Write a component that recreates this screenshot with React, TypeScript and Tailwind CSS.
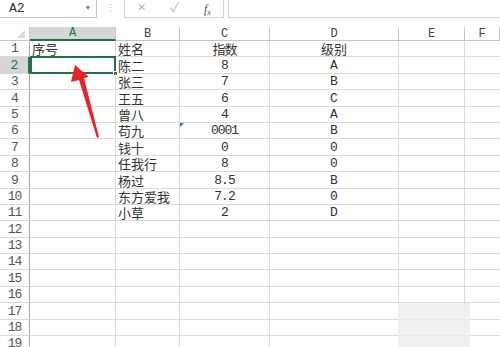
import React from 'react';

const cols = [
  { key: 'A', w: 'w-[86px]' },
  { key: 'B', w: 'w-[64px]' },
  { key: 'C', w: 'w-[90px]' },
  { key: 'D', w: 'w-[129px]' },
  { key: 'E', w: 'w-[66px]' },
  { key: 'F', w: 'flex-1' },
];

const data: { name: string; score: string; level: string }[] = [
  { name: '姓名', score: '指数', level: '级别' },
  { name: '陈二', score: '8', level: 'A' },
  { name: '张三', score: '7', level: 'B' },
  { name: '王五', score: '6', level: 'C' },
  { name: '曾八', score: '4', level: 'A' },
  { name: '苟九', score: '0001', level: 'B' },
  { name: '钱十', score: '0', level: '0' },
  { name: '任我行', score: '8', level: '0' },
  { name: '杨过', score: '8.5', level: 'B' },
  { name: '东方爱我', score: '7.2', level: '0' },
  { name: '小草', score: '2', level: 'D' },
];

const mono = { fontFamily: '"Liberation Mono", "Noto Sans CJK SC", monospace' };
const cjk = { fontFamily: '"Noto Sans CJK SC", sans-serif' };

export default function App() {
  const rows = Array.from({ length: 19 }, (_, i) => i + 1);

  return (
    <div className="relative w-[500px] h-[347px] overflow-hidden bg-white text-[13px] text-[#333]" style={mono}>
      {/* Formula bar */}
      <div className="flex items-stretch h-[18px]">
        <div className="w-[97px] flex items-center justify-between border border-[#c8c8c8] border-l-0 border-t-0 pl-[9px] pr-[6px] text-[#333]">
          <span className="leading-none">A2</span>
          <span className="text-[7px] text-[#777]">▼</span>
        </div>
        <div className="w-[27px] flex items-center justify-center text-[#b5b5b5] text-[11px]">⋮</div>
        <div className="w-[100px] flex items-center justify-around border border-[#d4d4d4] border-t-0 text-[#b8b8b8]">
          <span className="text-[15px] leading-none">×</span>
          <span className="text-[13px] leading-none">✓</span>
          <span className="italic text-[#555] text-[12px] leading-none" style={{ fontFamily: '"Liberation Serif", serif' }}>
            f<sub className="text-[8px]">x</sub>
          </span>
        </div>
        <div className="flex-1 ml-[4px] border border-[#d4d4d4] border-t-0 border-r-0" />
      </div>

      <div className="h-[9px]" />

      {/* Column headers */}
      <div className="flex h-[14px] text-[12px] text-[#444]">
        <div className="w-[30px] relative border-r border-b border-[#c6c6c6]">
          <div className="absolute right-[4px] bottom-[2px] w-0 h-0 border-l-[8px] border-l-transparent border-b-[8px] border-b-[#d8d8d8]" />
        </div>
        {cols.map((c) =>
          c.key === 'A' ? (
            <div key={c.key} className={`${c.w} flex items-center justify-center leading-none bg-[#d6d6d6] border-r border-[#c6c6c6] border-b-2 border-b-[#217346] text-[#217346]`}>
              {c.key}
            </div>
          ) : (
            <div key={c.key} className={`${c.w} flex items-center justify-center leading-none border-r border-b border-[#c6c6c6]`}>
              {c.key}
            </div>
          )
        )}
      </div>

      {/* Rows */}
      {rows.map((r) => {
        const d = data[r - 1];
        const sel = r === 2;
        return (
          <div key={r} className="flex h-[16.4px]">
            <div
              className={`w-[30px] flex items-end justify-center pb-[1px] text-[13px] tracking-[-1px] border-b border-[#dadada] ${
                sel ? 'bg-[#d6d6d6] border-r-2 border-r-[#217346] text-[#217346]' : 'border-r border-r-[#a8a8a8] text-[#555]'
              }`}
            >
              <span className="leading-[13px]">{r}</span>
            </div>
            <div className="w-[86px] relative flex items-end pl-[2px] pb-[1px] border-r border-b border-[#dadada]">
              {r === 1 && <span className="leading-[13px]" style={cjk}>序号</span>}
              {sel && (
                <div className="absolute left-0 -top-px right-[-1px] bottom-[-1px] border-2 border-[#217346]">
                  <div className="absolute right-[-4px] bottom-[-4px] w-[5px] h-[5px] bg-[#217346] border border-white" />
                </div>
              )}
            </div>
            <div className="w-[64px] flex items-end pl-[2px] pb-[1px] border-r border-b border-[#dadada]">
              <span className="leading-[13px]" style={cjk}>{d?.name}</span>
            </div>
            <div className="w-[90px] relative flex items-end justify-center pb-[1px] border-r border-b border-[#dadada]">
              {r === 6 && (
                <div className="absolute left-0 top-0 w-0 h-0 border-t-[4px] border-t-[#1e8c3a] border-r-[4px] border-r-transparent" />
              )}
              <span className="leading-[13px] tracking-[-1px]" style={r === 1 ? cjk : undefined}>{d?.score}</span>
            </div>
            <div className="w-[129px] flex items-end justify-center pb-[1px] border-r border-b border-[#dadada]">
              <span className="leading-[13px]" style={r === 1 ? cjk : undefined}>{d?.level}</span>
            </div>
            <div className="w-[66px] border-r border-b border-[#dadada]" />
            <div className="flex-1 border-b border-[#dadada]" />
          </div>
        );
      })}

      {/* Red annotation arrow */}
      <svg className="absolute left-0 top-0 pointer-events-none" width="500" height="347">
        <polygon points="75,65 89,77 84,78 99,137 97,138 79,80 71,82" fill="#e8242b" />
      </svg>

      {/* Watermark blur */}
      <div className="absolute left-[398px] top-[303px] w-[72px] h-[44px] bg-[#ededed]/80" />
    </div>
  );
}
